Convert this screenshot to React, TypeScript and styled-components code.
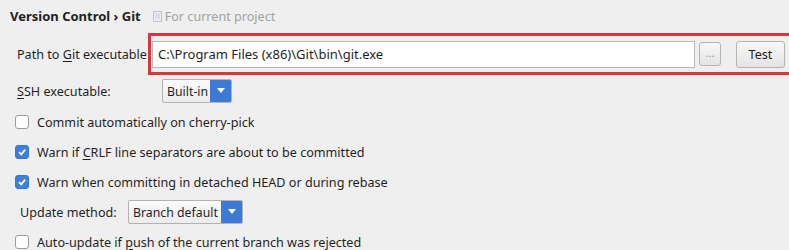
import React from "react";
import styled, { createGlobalStyle } from "styled-components";

const GlobalStyle = createGlobalStyle`
  html, body {
    margin: 0;
    padding: 0;
    background: #efefef;
    overflow: hidden;
  }
  body {
    font-family: "Noto Sans", "Open Sans", sans-serif;
    font-size: 12.6px;
    color: #1f1f1f;
  }
`;

const Page = styled.div`
  width: 789px;
  height: 250px;
  overflow: hidden;
  display: flex;
  flex-direction: column;
  padding: 5px 0 0 10px;
  box-sizing: border-box;
`;

const Header = styled.div`
  display: flex;
  align-items: center;
  height: 22px;
  flex-shrink: 0;
  gap: 6px;
`;

const Title = styled.span`
  font-weight: 700;
  font-size: 13px;
  color: #222;
`;

const Hint = styled.span`
  display: flex;
  align-items: center;
  gap: 3px;
  color: #a2a2a2;
  margin-left: 6px;
`;

const Row = styled.div<{ $h: number; $indent?: number; $mt?: number }>`
  display: flex;
  align-items: center;
  height: ${(p) => p.$h}px;
  margin-top: ${(p) => p.$mt ?? 0}px;
  padding-left: ${(p) => p.$indent ?? 7}px;
  flex-shrink: 0;
`;

const Label = styled.span<{ $w: number }>`
  width: ${(p) => p.$w}px;
  flex-shrink: 0;
  white-space: nowrap;
`;

const Highlight = styled.div`
  position: relative;
  display: flex;
  align-items: center;
  width: 660px;
  height: 36px;
  border: 3px solid #d9363e;
  border-right: none;
  background: #efefef;
  flex-shrink: 0;
`;

const PathInput = styled.div`
  width: 536px;
  height: 25px;
  margin-left: 1px;
  border: 1px solid #b9b9b9;
  background: #fff;
  display: flex;
  align-items: center;
  padding-left: 5px;
  font-size: 13px;
`;

const Button = styled.div<{ $w: number; $h: number; $ml: number }>`
  width: ${(p) => p.$w}px;
  height: ${(p) => p.$h}px;
  margin-left: ${(p) => p.$ml}px;
  box-sizing: border-box;
  border: 1px solid #b4b4b4;
  border-radius: 3px;
  background: linear-gradient(#f8f8f8, #e4e4e4);
  display: flex;
  align-items: center;
  justify-content: center;
  color: #222;
`;

const Dots = styled.span`
  color: #999;
  font-size: 11px;
  margin-top: -4px;
`;

const Select = styled.div<{ $w: number }>`
  width: ${(p) => p.$w}px;
  height: 24px;
  box-sizing: border-box;
  border: 1px solid #b2b2b2;
  border-radius: 2px;
  background: linear-gradient(#fbfbfb, #ececec);
  display: flex;
  align-items: stretch;
  overflow: hidden;
`;

const SelectText = styled.span`
  flex: 1;
  display: flex;
  align-items: center;
  padding-left: 4px;
  font-size: 12.3px;
  white-space: nowrap;
  overflow: hidden;
`;

const Arrow = styled.span`
  width: 21px;
  flex-shrink: 0;
  background: #3c7ad4;
  display: flex;
  align-items: center;
  justify-content: center;
`;

const Check = styled.span<{ $on?: boolean }>`
  width: 14px;
  height: 14px;
  box-sizing: border-box;
  border-radius: 3px;
  margin-right: 8px;
  flex-shrink: 0;
  border: 1px solid ${(p) => (p.$on ? "#3a76cf" : "#9c9c9c")};
  background: ${(p) => (p.$on ? "#3f7fd8" : "#fff")};
  display: flex;
  align-items: center;
  justify-content: center;
`;

const U = styled.span`
  text-decoration: underline;
  text-underline-offset: 2px;
`;

const Tri = () => (
  <svg width="8" height="6" viewBox="0 0 8 6">
    <path d="M0 0 H8 L4 5 Z" fill="#fff" />
  </svg>
);

const Tick = () => (
  <svg width="10" height="10" viewBox="0 0 10 10">
    <path d="M2 5.2 L4.2 7.4 L8.2 2.6" stroke="#fff" strokeWidth="1.8" fill="none" />
  </svg>
);

const CheckRow = ({ on, children }: { on?: boolean; children: React.ReactNode }) => (
  <Row $h={30} $indent={5}>
    <Check $on={on}>{on && <Tick />}</Check>
    <span>{children}</span>
  </Row>
);

export default function App() {
  return (
    <>
      <GlobalStyle />
      <Page>
        <Header>
          <Title>Version Control › Git</Title>
          <Hint>
            <svg width="9" height="11" viewBox="0 0 9 11">
              <rect x="0.5" y="0.5" width="8" height="10" fill="none" stroke="#b8c4d6" />
              <path d="M2 3 H7 M2 5 H7 M2 7 H7" stroke="#c6cfdc" />
            </svg>
            For current project
          </Hint>
        </Header>
        <Row $h={50} $mt={2}>
          <Label $w={131}>
            Path to <U>G</U>it executable:
          </Label>
          <Highlight>
            <PathInput>C:\Program Files (x86)\Git\bin\git.exe</PathInput>
            <Button $w={22} $h={24} $ml={4}>
              <Dots>...</Dots>
            </Button>
            <Button $w={49} $h={27} $ml={15}>
              Test
            </Button>
          </Highlight>
        </Row>
        <Row $h={24}>
          <Label $w={145}>
            <U>S</U>SH executable:
          </Label>
          <Select $w={70}>
            <SelectText>Built-in</SelectText>
            <Arrow>
              <Tri />
            </Arrow>
          </Select>
        </Row>
        <Row $h={4} />
        <CheckRow>Commit automatically on cherry-pick</CheckRow>
        <CheckRow on>
          Warn if <U>C</U>RLF line separators are about to be committed
        </CheckRow>
        <CheckRow on>Warn when committing in detached HEAD or during rebase</CheckRow>
        <Row $h={30} $indent={10}>
          <Label $w={108}>Update method:</Label>
          <Select $w={115}>
            <SelectText>Branch default</SelectText>
            <Arrow>
              <Tri />
            </Arrow>
          </Select>
        </Row>
        <CheckRow>
          Auto-update if <U>p</U>ush of the current branch was rejected
        </CheckRow>
      </Page>
    </>
  );
}
